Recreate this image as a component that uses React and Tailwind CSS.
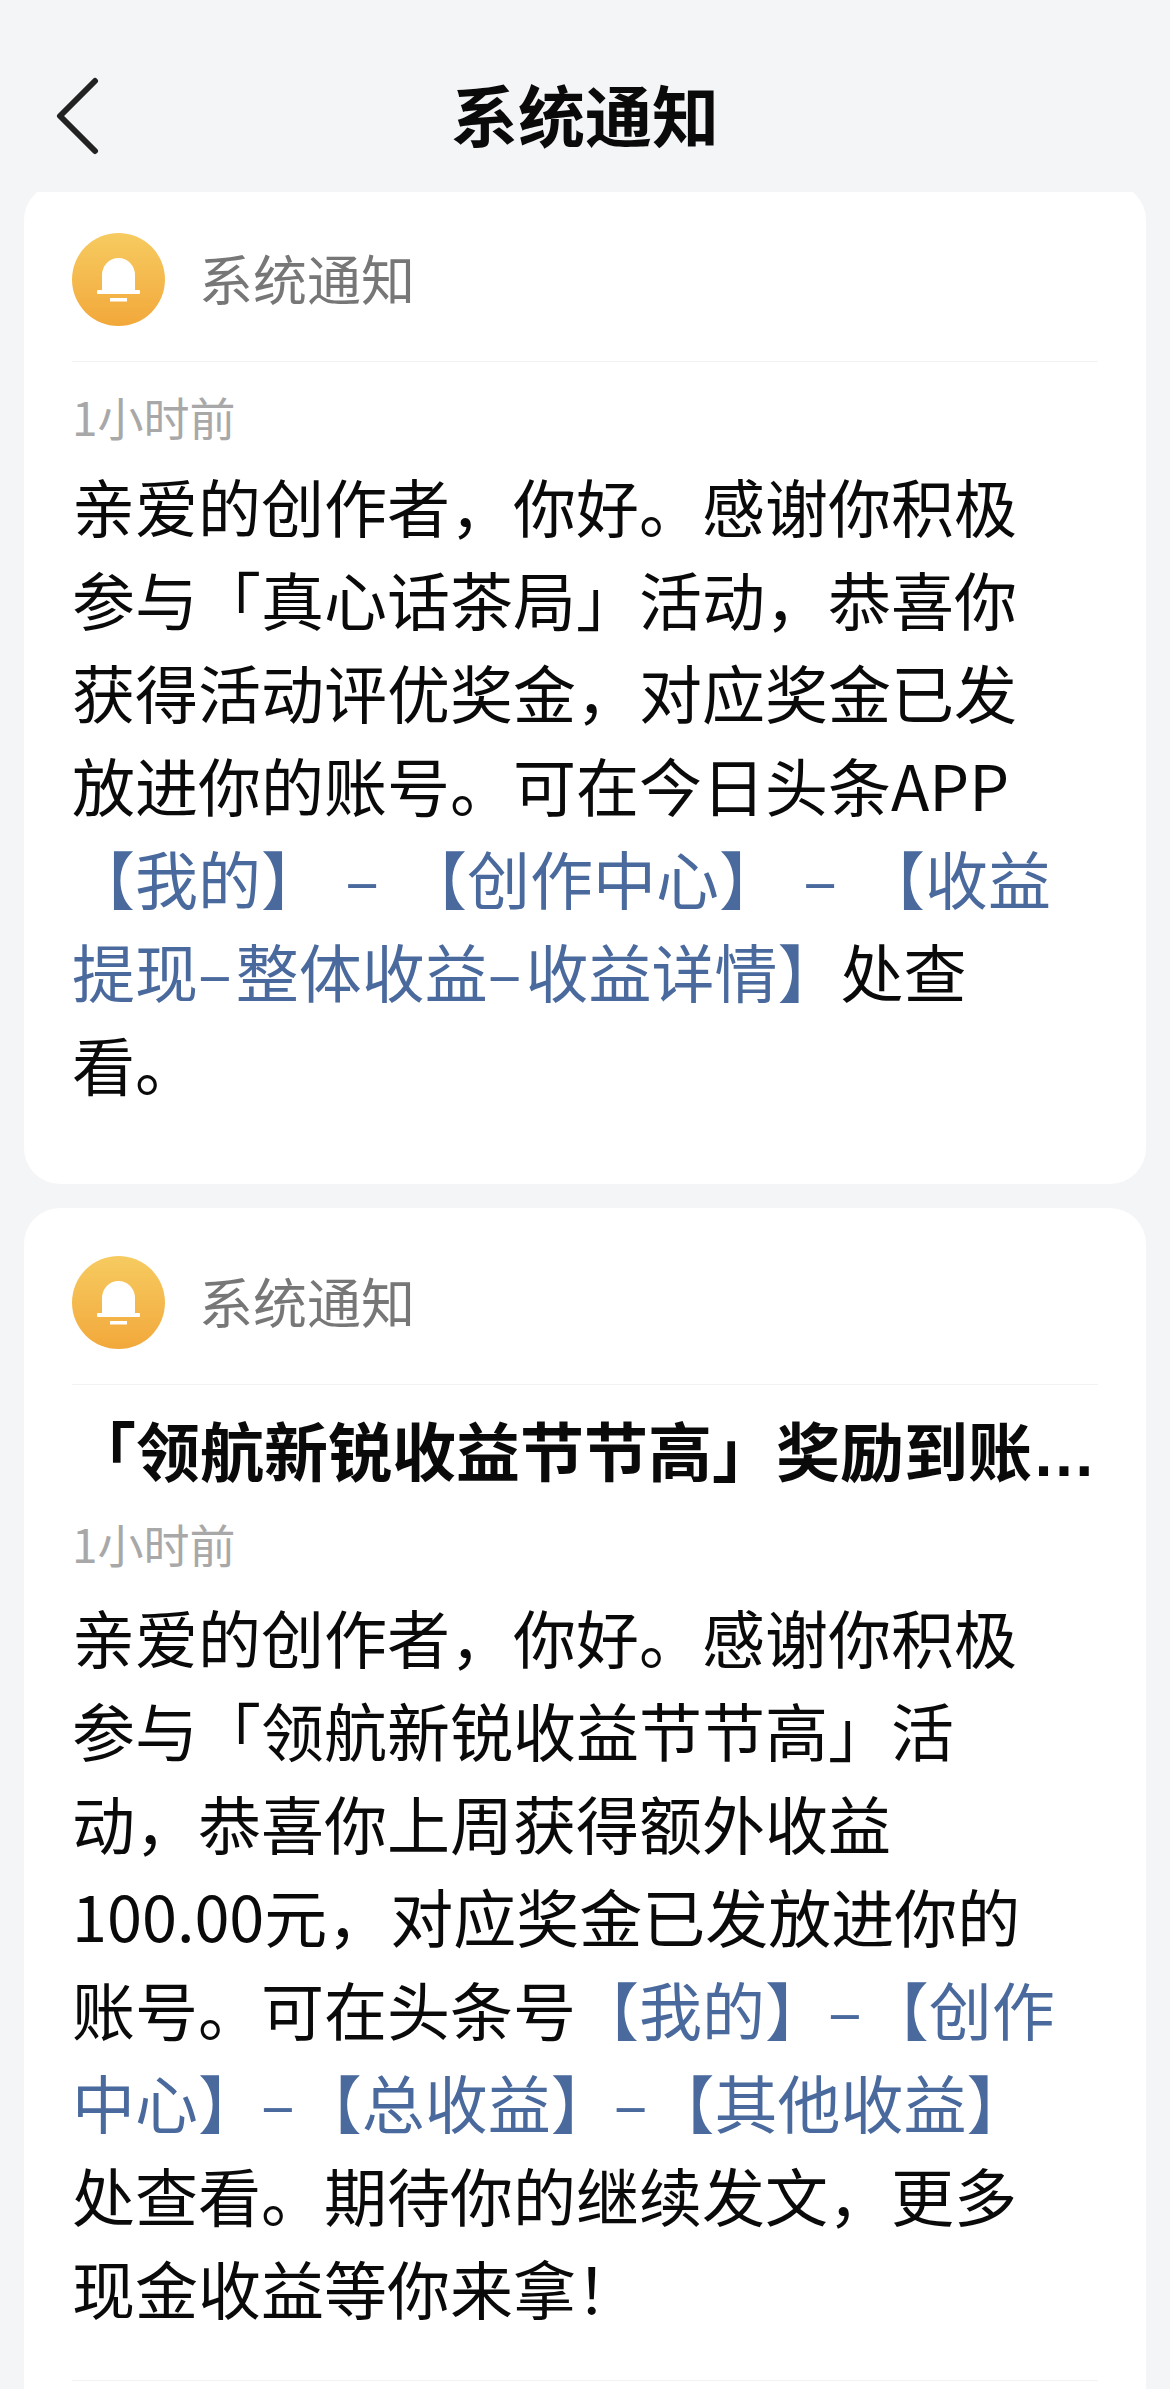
import React from 'react';

const L = ({ children }) => <span className="text-[#4a6a9e]">{children}</span>;
const Dash = () => <span className="tracking-[4px]">–</span>;

const firstBody = [
	<>亲爱的创作者，你好。感谢你积极</>,
	<>参与「真心话茶局」活动，恭喜你</>,
	<>获得活动评优奖金，对应奖金已发</>,
	<>放进你的账号。可在今日头条APP</>,
	<L><span className="[word-spacing:7px]">【我的】 <Dash /> 【创作中心】 <Dash /> 【收益</span></L>,
	<><L>提现<Dash />整体收益<Dash />收益详情】</L>处查</>,
	<>看。</>
];

const secondBody = [
	<>亲爱的创作者，你好。感谢你积极</>,
	<>参与「领航新锐收益节节高」活</>,
	<>动，恭喜你上周获得额外收益</>,
	<>100.00元，对应奖金已发放进你的</>,
	<>账号。可在头条号<L>【我的】<Dash />【创作</L></>,
	<L>中心】<Dash />【总收益】<Dash />【其他收益】</L>,
	<>处查看。期待你的继续发文，更多</>,
	<>现金收益等你来拿！</>
];

const BellAvatar = () => (
	<div className="w-[93px] h-[93px] rounded-full bg-linear-to-b from-[#f6cb60] to-[#f2a83a] shrink-0">
		<svg width="93" height="93" viewBox="0 0 93 93" fill="#fff">
			<path d="M30 58V42a16.500 17 0 0 1 33 0V58Z" />
			<rect x="25" y="57" width="43" height="4" rx="1" />
			<rect x="38" y="65" width="17" height="3.500" />
		</svg>
	</div>
);

const CardHeader = () => (
	<div className="flex items-center gap-[34px] pb-[35px] border-b border-[#f2f2f2]">
		<BellAvatar />
		<span className="text-[54px] leading-[90px] mb-[3px] text-[#777777]">系统通知</span>
	</div>
);

const Body = ({ lines }) => (
	<div className="text-[63px] leading-[93px] text-[#0a0a0a] whitespace-nowrap">
		{lines.map((line, i) => (
			<div key={i}>{line}</div>
		))}
	</div>
);

export default function App() {
	return (
		<div
			className="w-[1170px] h-[2389px] bg-[#f4f5f7] overflow-hidden flex flex-col"
			style={{ fontFamily: '"Noto Sans CJK SC", "Noto Sans", sans-serif' }}
		>
			<header className="h-[192px] shrink-0 relative flex items-center justify-center pt-[34px]">
				<svg className="absolute left-[56px] top-[76px]" width="44" height="80" viewBox="0 0 44 80" fill="none">
					<path d="M39 5 4 40l35 35" stroke="#222" strokeWidth="6" strokeLinecap="round" strokeLinejoin="round" />
				</svg>
				<h1 className="text-[67px] leading-[90px] font-bold text-[#0a0a0a]">系统通知</h1>
			</header>
			<main className="flex-1 min-h-0 overflow-hidden px-[24px]">
				<section className="-mt-[8px] bg-white rounded-[36px] px-[48px] pt-[49px] pb-[75px]">
					<CardHeader />
					<p className="text-[46px] leading-[68px] mt-[20px] mb-[8px] text-[#a8a8a8]">1小时前</p>
					<Body lines={firstBody} />
				</section>
				<section className="mt-[24px] bg-white rounded-[36px] px-[48px] pt-[48px] pb-[40px]">
					<CardHeader />
					<h2 className="text-[64px] leading-[93px] font-bold text-[#0a0a0a] whitespace-nowrap mt-[23px] font-['Liberation_Sans','Noto_Sans_CJK_SC',sans-serif]">
						「领航新锐收益节节高」奖励到账…
					</h2>
					<p className="text-[46px] leading-[68px] mt-[8px] mb-[12px] text-[#a8a8a8]">1小时前</p>
					<Body lines={secondBody} />
					<div className="mt-[47px] border-b border-[#f2f2f2]" />
				</section>
			</main>
		</div>
	);
}
